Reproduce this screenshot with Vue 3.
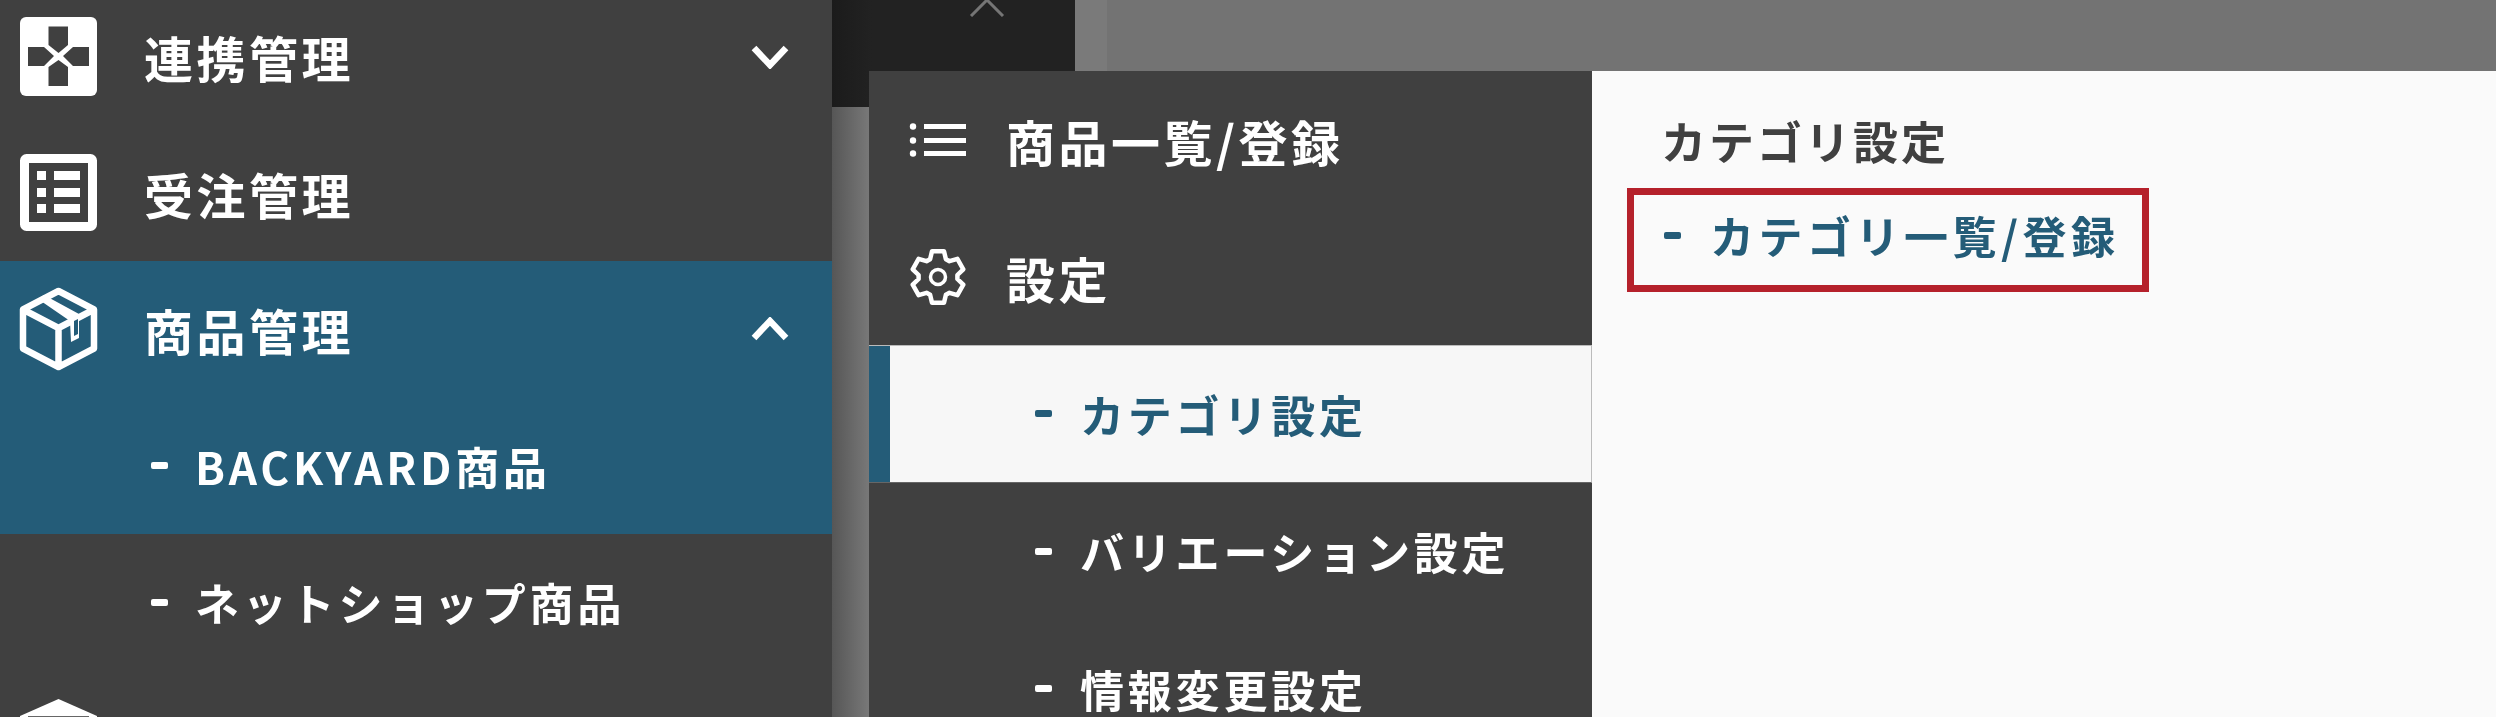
<script setup>
const tooth = []
for (let i = 0; i < 6; i++) {
  const a = -90 + i * 60
  for (const [r, d] of [[19.5, -24], [26.5, -13], [26.5, 13], [19.5, 24]]) {
    const rad = ((a + d) * Math.PI) / 180
    tooth.push(`${(r * Math.cos(rad)).toFixed(1)},${(r * Math.sin(rad)).toFixed(1)}`)
  }
}
const gearPoints = tooth.join(' ')
const panelSubs = ['バリエーション設定', '情報変更設定']
</script>

<template>
  <div class="page">
    <aside class="sidebar">
      <div class="row">
        <svg class="icon" viewBox="20 18 77 79">
          <rect x="20" y="18" width="77" height="79" rx="6" fill="#fff" />
          <path fill="#404040" d="M48.5 27.5H68V46l-9.5 8-10-8zM28 48h16l10 9-10 10H28zM89 48H73l-10 9 10 10h16zM48.5 87H68V68l-9.500-7-10 7z" />
        </svg>
        <span class="label">連携管理</span>
        <svg class="chevron" viewBox="0 0 38 25"><path d="M3 4l16 17L35 4" /></svg>
      </div>
      <div class="row">
        <svg class="icon" viewBox="20 154 77 77">
          <rect x="24.5" y="158.5" width="68" height="68" rx="2" fill="none" stroke="#fff" stroke-width="9" />
          <path fill="#fff" d="M37 171h9v9h-9zM54 171h26v9H54zM37 188h9v9h-9zM54 188h26v9H54zM37 204h9v9h-9zM54 204h26v9H54z" />
        </svg>
        <span class="label">受注管理</span>
      </div>
      <div class="row active">
        <svg class="icon" viewBox="20 289 77 82">
          <path d="M58.5 292L94 310.5v39L58.5 368 23 349.5v-39zM23 310.5L58.5 329 94 310.5M58.5 329v39" fill="none" stroke="#fff" stroke-width="6.500" stroke-linejoin="round" />
          <path fill="#fff" d="M38 300l6-4 35 19v24l-8 4-1-21z" />
          <path fill="#245c78" d="M74 322l4-2v15l-4 2z" />
        </svg>
        <span class="label">商品管理</span>
        <svg class="chevron" viewBox="0 0 38 25"><path d="M3 21L19 4l16 17" /></svg>
      </div>
      <div class="row sub active">
        <span class="dash"></span>
        <span class="sub-label">BACKYARD商品</span>
      </div>
      <div class="row sub">
        <span class="dash"></span>
        <span class="sub-label">ネットショップ商品</span>
      </div>
      <div class="row">
        <svg class="icon" viewBox="20 699 77 80">
          <path fill="#fff" d="M58.5 699L97 716v63H20v-63z" />
          <path fill="#666" d="M28 716h61v55H28z" />
        </svg>
        <span class="label">在庫管理</span>
      </div>
    </aside>

    <main class="backdrop">
      <div class="topbar">
        <div class="dark-block">
          <svg class="top-chevron" viewBox="0 0 36 17"><path d="M2 16L18 0l16 16" /></svg>
        </div>
        <div class="gray-block"></div>
      </div>

      <div class="flyout">
        <nav class="panel-nav">
          <div class="panel-row">
            <svg class="panel-icon" viewBox="0 0 60 60">
              <circle cx="6" cy="16.500" r="3.200" fill="#fff" />
              <circle cx="6" cy="30.500" r="3.200" fill="#fff" />
              <circle cx="6" cy="43.500" r="3.200" fill="#fff" />
              <path fill="#fff" d="M17 14h42v5H17zM17 28h42v5H17zM17 41h42v5H17z" />
            </svg>
            <span class="label">商品一覧/登録</span>
          </div>
          <div class="panel-row">
            <svg class="panel-icon" viewBox="-31 -30 60 60">
              <polygon :points="gearPoints" fill="none" stroke="#fff" stroke-width="4.500" stroke-linejoin="round" />
              <circle r="7.500" fill="none" stroke="#fff" stroke-width="3.500" />
            </svg>
            <span class="label">設定</span>
          </div>
          <div class="panel-sub current">
            <span class="dash"></span>
            <span class="sub-label">カテゴリ設定</span>
          </div>
          <div v-for="name in panelSubs" :key="name" class="panel-sub">
            <span class="dash"></span>
            <span class="sub-label">{{ name }}</span>
          </div>
        </nav>

        <section class="panel-content">
          <h3 class="content-title">カテゴリ設定</h3>
          <div class="highlight">
            <span class="dash"></span>
            <span class="sub-label">カテゴリ一覧/登録</span>
          </div>
        </section>
      </div>
    </main>
  </div>
</template>

<style scoped>
.page {
  display: flex;
  height: 717px;
  overflow: hidden;
  font-family: "Noto Sans CJK JP", "Noto Sans", sans-serif;
  font-weight: 700;
  color: #fff;
  filter: blur(0.6px);
}

.sidebar {
  flex: 0 0 832px;
  background: #404040;
}

.row {
  display: flex;
  align-items: center;
  height: 136.5px;
  padding-left: 20px;
  box-sizing: border-box;
}

.row:first-child {
  margin-top: -12px;
}

.row.active {
  background: #245c78;
}

.row.sub {
  padding-left: 151px;
  gap: 27px;
}

.icon {
  flex: 0 0 77px;
  width: 77px;
  margin-right: 47px;
  overflow: visible;
}

.label {
  font-size: 49px;
  letter-spacing: 3.500px;
  line-height: 1;
  padding-top: 1px;
}

.chevron {
  width: 38px;
  height: 25px;
  margin-left: auto;
  margin-right: 43px;
  fill: none;
  stroke: #fff;
  stroke-width: 6.500;
}

.dash {
  flex: 0 0 17px;
  width: 17px;
  height: 7px;
  border-radius: 2px;
  background: currentColor;
}

.sub-label {
  font-size: 44px;
  letter-spacing: 3.800px;
  line-height: 1;
  white-space: nowrap;
}

.backdrop {
  flex: 1;
  position: relative;
  background: linear-gradient(90deg, #565656, #787878 37px);
}

.topbar {
  display: flex;
  height: 107px;
}

.dark-block {
  flex: 0 0 243px;
  height: 107px;
  background: linear-gradient(90deg, #1b1b1b, #222 40px);
  position: relative;
}

.top-chevron {
  position: absolute;
  left: 137px;
  top: 0;
  width: 36px;
  height: 17px;
  fill: none;
  stroke: #757575;
  stroke-width: 3;
}

.gray-block {
  flex: 1;
  height: 71px;
  background: linear-gradient(90deg, #7a7a7a 32px, #737373 32px);
}

.flyout {
  position: absolute;
  left: 37px;
  top: 71px;
  right: 0;
  bottom: 0;
  display: flex;
}

.panel-nav {
  flex: 0 0 723px;
  background: #404040;
}

.panel-row {
  display: flex;
  align-items: center;
  height: 137px;
  padding-left: 38px;
}

.panel-icon {
  flex: 0 0 60px;
  height: 60px;
  margin-right: 39px;
}

.panel-sub {
  display: flex;
  align-items: center;
  gap: 28px;
  height: 137.5px;
  padding-left: 166px;
  box-sizing: border-box;
}

.panel-sub.current {
  background: #f7f7f7;
  color: #245c78;
  border-top: 1px solid #bbb;
  border-bottom: 1px solid #666;
  border-right: 1px solid #bbb;
  box-shadow: inset 21px 0 0 #245c78;
}

.panel-content {
  flex: 1;
  background: #fafafa;
  padding: 47px 0 0 35px;
}

.content-title {
  margin: 0 0 0 34px;
  font-size: 45px;
  line-height: 1;
  letter-spacing: 3px;
  font-weight: 700;
  color: #404040;
}

.highlight {
  display: flex;
  align-items: center;
  gap: 29px;
  box-sizing: border-box;
  width: 522px;
  height: 104px;
  margin-top: 25px;
  padding: 0 0 10px 30px;
  border: 7px solid #b5212b;
  color: #245c78;
}

.highlight .sub-label {
  letter-spacing: 4.500px;
}
</style>

<style>
html,
body {
  margin: 0;
  overflow: hidden;
  background: #fafafa;
}
</style>
